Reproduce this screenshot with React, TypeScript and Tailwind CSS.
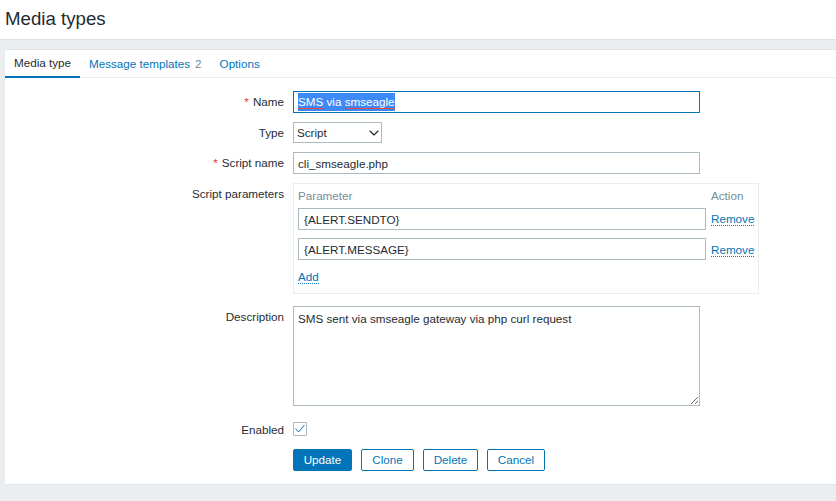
import { ChevronDown } from "lucide-react";
import type { ReactNode } from "react";

const inputClass =
  "block h-[22px] border border-[#acbbc2] bg-white px-[4px] text-[11.67px] text-[#1f2c33] outline-none";

const squiggle = "border-b border-dotted border-[#e33734]";

function Row({
  label,
  required,
  className,
  labelClass,
  children,
}: {
  label?: string;
  required?: boolean;
  className?: string;
  labelClass?: string;
  children: ReactNode;
}) {
  return (
    <div className={`flex ${className ?? ""}`}>
      <div className={`w-[279px] shrink-0 text-right ${labelClass ?? "leading-[22px]"}`}>
        {required && <span className="mr-[4px] text-[#e33734]">*</span>}
        {label}
      </div>
      <div className="ml-[9px]">{children}</div>
    </div>
  );
}

function DottedLink({ children }: { children: ReactNode }) {
  return (
    <a className="cursor-pointer border-b border-dotted border-[#0275b8] text-[#0275b8]">
      {children}
    </a>
  );
}

export default function App() {
  return (
    <div className="min-h-screen overflow-hidden bg-[#ebeef0] font-['Liberation_Sans',Arial,sans-serif] text-[11.67px] text-[#1f2c33]">
      <header className="flex h-[40px] items-center border-b border-[#dfe4e7] bg-white pb-[1px] pl-[5px]">
        <h1 className="text-[18.67px] font-normal">Media types</h1>
      </header>

      <main className="mt-[9px] ml-[5px] h-[436px] border-y border-[#dfe4e7] bg-white">
        <nav className="flex h-[28px] items-center border-b border-[#ebeef0]">
          <div className="flex h-[28px] w-[75px] items-center justify-center border-b-2 border-[#0275b8]">
            Media type
          </div>
          <a className="ml-[9px] text-[#0275b8]">Message templates</a>
          <span className="ml-[5px] text-[#768d99]">2</span>
          <a className="ml-[18px] text-[#0275b8]">Options</a>
        </nav>

        <form className="pt-[13px]">
          <Row label="Name" required className="mb-[9px]">
            <div className="flex h-[22px] w-[407px] items-center border border-[#0275b8] px-[4px]">
              <span className="bg-[#3d8af7] whitespace-pre text-white">
                <span className={squiggle}>SMS</span> via <span className={squiggle}>smseagle</span>
              </span>
            </div>
          </Row>

          <Row label="Type" className="mb-[8px]">
            <div className="relative w-[89px]">
              <select className="block h-[21px] w-full appearance-none border border-[#acbbc2] bg-white pl-[3px] text-[11.67px] text-[#1f2c33]">
                <option>Script</option>
              </select>
              <ChevronDown className="pointer-events-none absolute top-[3px] right-0 h-[16px] w-[16px] text-[#1f2c33]" strokeWidth={1.75} />
            </div>
          </Row>

          <Row label="Script name" required className="mb-[9px]">
            <input className={`${inputClass} w-[407px]`} defaultValue="cli_smseagle.php" />
          </Row>

          <Row label="Script parameters" labelClass="leading-[22px]" className="mb-[12px]">
            <div className="h-[111px] w-[466px] border border-[#ebeef0] pt-[5px] pl-[4px]">
              <div className="grid grid-cols-[408px_auto] gap-x-[5px]">
                <div className="h-[19px] leading-[14px] text-[#768d99]">Parameter</div>
                <div className="h-[19px] leading-[14px] text-[#768d99]">Action</div>
                <input className={`${inputClass} h-[21px] w-[408px] pl-[5px]`} defaultValue="{ALERT.SENDTO}" />
                <div className="leading-[21px]">
                  <DottedLink>Remove</DottedLink>
                </div>
                <input className={`${inputClass} mt-[8px] w-[408px] pl-[5px]`} defaultValue="{ALERT.MESSAGE}" />
                <div className="mt-[9px] leading-[22px]">
                  <DottedLink>Remove</DottedLink>
                </div>
              </div>
              <div className="mt-[8px] leading-[16px]">
                <DottedLink>Add</DottedLink>
              </div>
            </div>
          </Row>

          <Row label="Description" labelClass="leading-[22px]" className="mb-[16px]">
            <textarea
              className="block h-[100px] w-[407px] border border-[#acbbc2] bg-white px-[4px] py-[3px] text-[11.67px] text-[#1f2c33] outline-none"
              defaultValue="SMS sent via smseagle gateway via php curl request"
            />
          </Row>

          <Row label="Enabled" labelClass="leading-[16px]" className="mb-[13px] h-[14px]">
            <div className="flex h-[14px] w-[14px] items-center justify-center rounded-[1px] border border-[#acbbc2]">
              <svg viewBox="0 0 12 12" className="h-[12px] w-[12px]" fill="none" stroke="#0275b8" strokeWidth="1">
                <polyline points="1.5,5.5 4.5,9 10.5,2" />
              </svg>
            </div>
          </Row>

          <div className="ml-[288px] flex gap-[9px]">
            <button type="button" className="h-[22px] w-[59px] rounded-[2px] border border-[#0275b8] bg-[#0275b8] text-white">
              Update
            </button>
            <button type="button" className="h-[22px] w-[53px] rounded-[2px] border border-[#0275b8] text-[#0275b8]">
              Clone
            </button>
            <button type="button" className="h-[22px] w-[55px] rounded-[2px] border border-[#0275b8] text-[#0275b8]">
              Delete
            </button>
            <button type="button" className="h-[22px] w-[58px] rounded-[2px] border border-[#0275b8] text-[#0275b8]">
              Cancel
            </button>
          </div>
        </form>
      </main>
    </div>
  );
}
